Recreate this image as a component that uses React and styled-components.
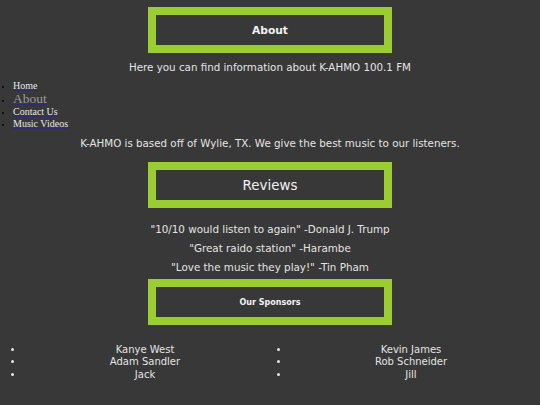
import React from 'react';
import styled, {createGlobalStyle} from "styled-components";

const navLinks = [
    {label: 'Home'},
    {label: 'About', current: true},
    {label: 'Contact Us'},
    {label: 'Music Videos'},
]

const reviews = [
    '"10/10 would listen to again" -Donald J. Trump',
    '"Great raido station" -Harambe',
    '"Love the music they play!" -Tin Pham',
]

const sponsors = [
    ['Kanye West', 'Adam Sandler', 'Jack'],
    ['Kevin James', 'Rob Schneider', 'Jill'],
]

function App() {
    return (
        <>
            <GlobalStyle/>
            <Page>
                <Banner $size="10.7px" $bold $top="7px">About</Banner>
                <Lead $top="7px">Here you can find information about K-AHMO 100.1 FM</Lead>
                <Nav>
                    {navLinks.map(link => (
                        <NavItem key={link.label} $current={link.current}>
                            <NavLink href="#" $current={link.current}>{link.label}</NavLink>
                        </NavItem>
                    ))}
                </Nav>
                <Lead $top="6px">K-AHMO is based off of Wylie, TX. We give the best music to our listeners.</Lead>
                <Banner $size="13.4px" $top="12px">Reviews</Banner>
                <Reviews>
                    {reviews.map(r => <Quote key={r}>{r}</Quote>)}
                </Reviews>
                <Banner $size="8px" $bold $top="5px">Our Sponsors</Banner>
                <Sponsors>
                    {sponsors.map((list, i) => (
                        <SponsorList key={i}>
                            {list.map(name => <Sponsor key={name}>{name}</Sponsor>)}
                        </SponsorList>
                    ))}
                </Sponsors>
            </Page>
        </>
    );
}

const GlobalStyle = createGlobalStyle`
body {
margin: 0;
background-color: #383838;
font-family: "DejaVu Sans", Verdana, sans-serif;
color: #e4e4e4;
}
`;
const Page = styled.div`
display: flex;
flex-direction: column;
align-items: center;
padding-bottom: 20px;
`;
const Banner = styled.div`
box-sizing: border-box;
width: 244px;
height: 46px;
margin-top: ${props => props.$top};
border: 8px solid #9acd32;
display: flex;
align-items: center;
justify-content: center;
font-size: ${props => props.$size};
font-weight: ${props => props.$bold ? 'bold' : 'normal'};
color: #f2f2f2;
`;
const Lead = styled.p`
margin: ${props => props.$top} 0 0;
font-size: 10.3px;
line-height: 14px;
text-align: center;
`;
const Nav = styled.ul`
align-self: stretch;
margin: 6px 0 0;
padding-left: 13px;
list-style: square;
font-family: "Liberation Serif", "Times New Roman", serif;
`;
const NavItem = styled.li`
color: #111;
font-size: ${props => props.$current ? '13.5px' : '10px'};
line-height: ${props => props.$current ? '14px' : '12px'};
&::marker {
font-size: 7px;
}
`;
const NavLink = styled.a`
color: ${props => props.$current ? '#9a9a9a' : '#e6e6e6'};
text-decoration: underline;
text-decoration-color: #2c2c6e;
`;
const Reviews = styled.div`
display: flex;
flex-direction: column;
align-items: center;
gap: 5px;
margin-top: 14px;
`;
const Quote = styled.p`
margin: 0;
font-size: 10.35px;
line-height: 14px;
`;
const Sponsors = styled.div`
align-self: stretch;
display: flex;
margin-top: 19px;
`;
const SponsorList = styled.ul`
width: 266px;
margin: 0;
padding-left: 24px;
box-sizing: border-box;
list-style: disc;
text-align: center;
`;
const Sponsor = styled.li`
font-size: 10px;
line-height: 12.3px;
`;

export default App;
